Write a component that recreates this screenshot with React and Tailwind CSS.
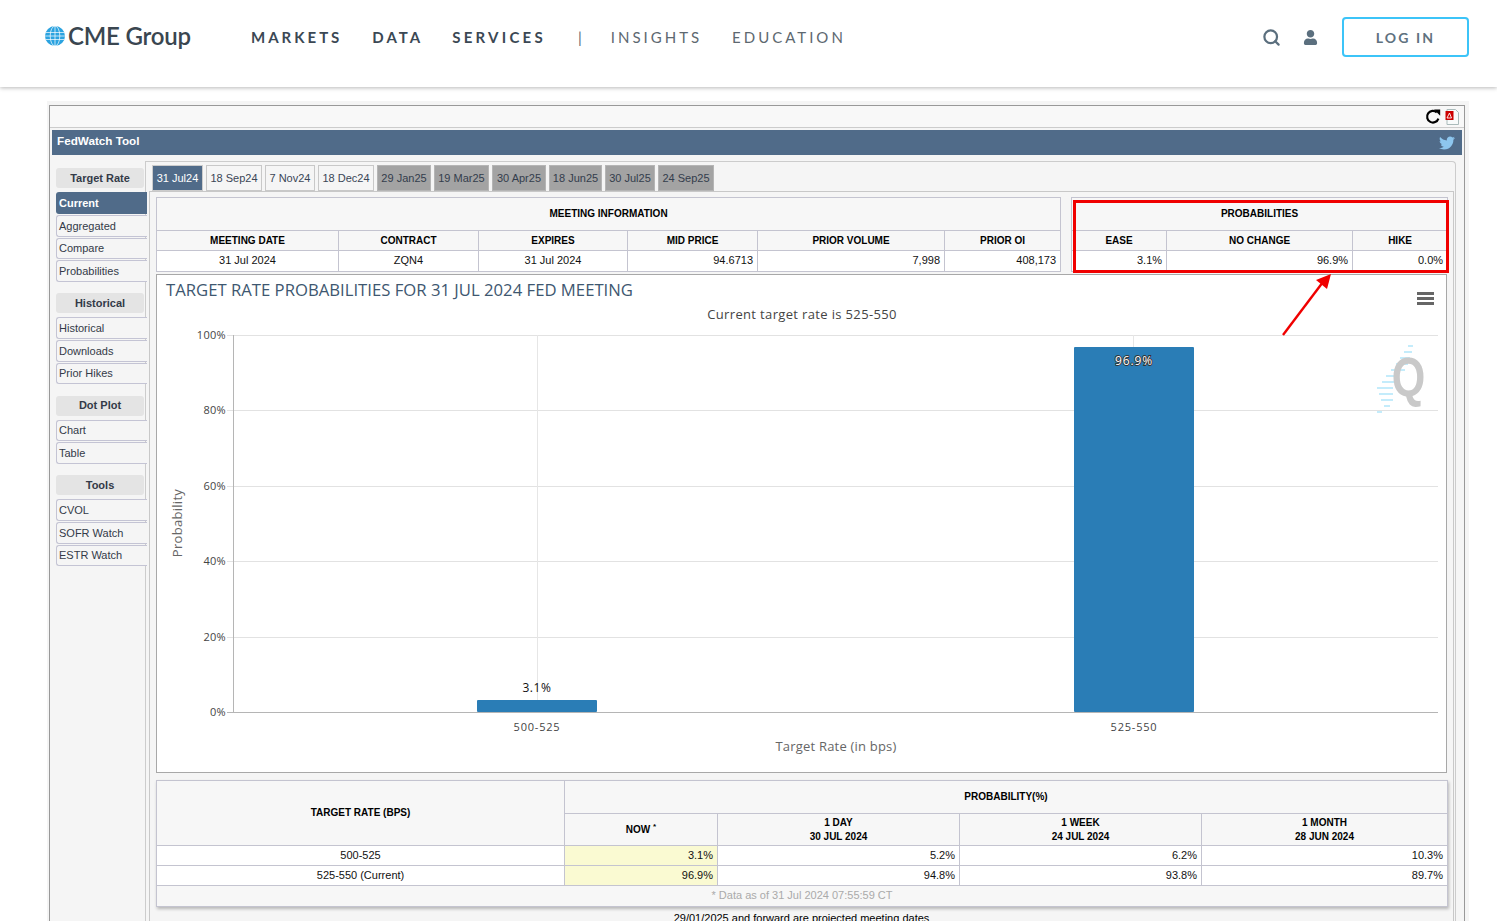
import { FaUser, FaTwitter } from "react-icons/fa";
import { Search } from "lucide-react";

const tabs = [
  { label: "31 Jul24", w: "w-[51px]", kind: "active" },
  { label: "18 Sep24", w: "w-[56px]", kind: "open" },
  { label: "7 Nov24", w: "w-[50px]", kind: "open" },
  { label: "18 Dec24", w: "w-[56px]", kind: "open" },
  { label: "29 Jan25", w: "w-[54px]", kind: "off" },
  { label: "19 Mar25", w: "w-[55px]", kind: "off" },
  { label: "30 Apr25", w: "w-[54px]", kind: "off" },
  { label: "18 Jun25", w: "w-[53px]", kind: "off" },
  { label: "30 Jul25", w: "w-[50px]", kind: "off" },
  { label: "24 Sep25", w: "w-[56px]", kind: "off" },
];

const menu = [
  { head: "Target Rate", items: ["Current", "Aggregated", "Compare", "Probabilities"] },
  { head: "Historical", items: ["Historical", "Downloads", "Prior Hikes"] },
  { head: "Dot Plot", items: ["Chart", "Table"] },
  { head: "Tools", items: ["CVOL", "SOFR Watch", "ESTR Watch"] },
];

const th = "border border-[#c4c4d0] bg-[#f7f7f7] text-[10px] leading-[14px] font-bold text-black text-center p-0 align-middle";
const td = "border border-[#c4c4d0] bg-white text-[11px] font-normal text-[#111] px-1 p-0 align-middle";

function CmeLogo() {
  return (
    <div className="flex items-center gap-[3px]">
      <svg width="20" height="20" viewBox="0 0 20 20">
        <circle cx="10" cy="10" r="10" fill="#2ba3e0" />
        <g stroke="#ffffff" strokeWidth="0.7" fill="none">
          <path d="M0.5 6.5h19M0 10h20M0.5 13.5h19" />
          <path d="M10 0v20" />
          <ellipse cx="10" cy="10" rx="4.8" ry="10" />
        </g>
      </svg>
      <span className="font-['Lato'] text-[24px] font-semibold tracking-[-0.2px] text-[#3a4650] leading-none">CME Group</span>
    </div>
  );
}

function Header() {
  return (
    <header className="h-[87px] bg-white shadow-[0_1px_4px_rgba(0,0,0,0.28)] flex items-center pl-[45px] pr-[28px] relative z-10">
      <div className="w-[206px] -mt-[15px]">
        <CmeLogo />
      </div>
      <nav className="flex items-center gap-[30px] font-['Lato'] text-[15px] tracking-[3px] -mt-[13px]">
        <a className="font-bold text-[#3b4854]">MARKETS</a>
        <a className="font-bold text-[#3b4854]">DATA</a>
        <a className="font-bold text-[#3b4854] tracking-[3.25px] -ml-[1px]">SERVICES</a>
        <span className="text-[#5d6870] ml-[2px]">|</span>
        <a className="text-[#5d6870] -ml-[4px]">INSIGHTS</a>
        <a className="text-[#5d6870]">EDUCATION</a>
      </nav>
      <div className="ml-auto flex items-center -mt-[13px]">
        <Search className="w-[19px] h-[19px] text-[#5b6f7e]" strokeWidth={2.8} />
        <FaUser className="w-[15px] h-[15px] text-[#5b6f7e] ml-[22px]" />
        <button className="ml-[24px] w-[127px] h-[40px] border-2 border-[#3cc4f8] rounded-[4px] font-['Lato'] font-bold text-[14px] tracking-[2.1px] text-[#5f7280]">
          LOG IN
        </button>
      </div>
    </header>
  );
}

function Sidebar() {
  return (
    <aside className="w-[91px] ml-[6px] mt-[13px] shrink-0 flex flex-col gap-[11.4px] font-['Liberation_Sans'] relative z-10">
      {menu.map((group) => (
        <div key={group.head}>
          <div className="w-[88px] h-[20px] flex items-center justify-center rounded-[3px] bg-[#e4e4e4] text-[11px] font-bold text-[#333a48] mb-[4px]">
            {group.head}
          </div>
          <div className="flex flex-col gap-px">
            {group.items.map((item) =>
              item === "Current" ? (
                <div key={item} className="h-[22px] pl-[3px] flex items-center rounded-l-[3px] bg-[#506b89] text-white text-[11px] font-bold">
                  {item}
                </div>
              ) : (
                <div key={item} className="h-[21.67px] pl-[2px] flex items-center rounded-l-[3px] border border-r-0 border-[#c4c4d4] bg-[#f5f5f5] text-[#333a48] text-[11px]">
                  {item}
                </div>
              )
            )}
          </div>
        </div>
      ))}
    </aside>
  );
}

function Tabs() {
  return (
    <div className="flex gap-[3px] pl-[6px] pt-[3px] h-[29px] font-['Liberation_Sans'] text-[11px]">
      {tabs.map((t) => (
        <div
          key={t.label}
          className={
            t.kind === "active"
              ? `${t.w} h-[26px] flex items-center justify-center bg-[#506b89] text-white border border-[#cccccc]`
              : t.kind === "open"
              ? `${t.w} h-[26px] flex items-center justify-center bg-[#f5f5f5] text-[#3a4656] border border-[#c8c8c8]`
              : `${t.w} h-[26px] flex items-center justify-center bg-[#a3a3a3] text-[#333d4c] border border-[#b5b5b5]`
          }
        >
          {t.label}
        </div>
      ))}
    </div>
  );
}

function MeetingTable() {
  return (
    <table className="w-[904px] table-fixed border-collapse font-['Liberation_Sans']">
      <colgroup>
        <col className="w-[182px]" />
        <col className="w-[140px]" />
        <col className="w-[149px]" />
        <col className="w-[130px]" />
        <col className="w-[187px]" />
        <col className="w-[116px]" />
      </colgroup>
      <tbody>
        <tr className="h-[33px]">
          <th colSpan={6} className={th}>MEETING INFORMATION</th>
        </tr>
        <tr className="h-[20px]">
          <th className={th}>MEETING DATE</th>
          <th className={th}>CONTRACT</th>
          <th className={th}>EXPIRES</th>
          <th className={th}>MID PRICE</th>
          <th className={th}>PRIOR VOLUME</th>
          <th className={th}>PRIOR OI</th>
        </tr>
        <tr className="h-[21px]">
          <td className={`${td} pb-[2px] text-center`}>31 Jul 2024</td>
          <td className={`${td} pb-[2px] text-center`}>ZQN4</td>
          <td className={`${td} pb-[2px] text-center`}>31 Jul 2024</td>
          <td className={`${td} pb-[2px] text-right`}>94.6713</td>
          <td className={`${td} pb-[2px] text-right`}>7,998</td>
          <td className={`${td} pb-[2px] text-right`}>408,173</td>
        </tr>
      </tbody>
    </table>
  );
}

function ProbTable() {
  return (
    <table className="w-[376px] table-fixed border-collapse font-['Liberation_Sans']">
      <colgroup>
        <col className="w-[95px]" />
        <col className="w-[186px]" />
        <col className="w-[95px]" />
      </colgroup>
      <tbody>
        <tr className="h-[33px]">
          <th colSpan={3} className={th}>PROBABILITIES</th>
        </tr>
        <tr className="h-[20px]">
          <th className={th}>EASE</th>
          <th className={th}>NO CHANGE</th>
          <th className={th}>HIKE</th>
        </tr>
        <tr className="h-[21px]">
          <td className={`${td} pb-[2px] text-right`}>3.1%</td>
          <td className={`${td} pb-[2px] text-right`}>96.9%</td>
          <td className={`${td} pb-[2px] text-right`}>0.0%</td>
        </tr>
      </tbody>
    </table>
  );
}

// chart uses page coordinates in its viewBox, easier to read off the picture
function Chart() {
  const grid = [
    { y: 335, label: "100%" },
    { y: 410, label: "80%" },
    { y: 486, label: "60%" },
    { y: 561, label: "40%" },
    { y: 637, label: "20%" },
    { y: 712, label: "0%" },
  ];
  return (
    <div className="w-[1291px] h-[499px] mt-[2px] border border-[#a8a8a8] bg-white">
      <svg width="1289" height="497" viewBox="157 275 1289 497" className="block font-['Open_Sans']">
        <text x="166" y="296" fontSize="16.7" fill="#3e5770">TARGET RATE PROBABILITIES FOR 31 JUL 2024 FED MEETING</text>
        <text x="802" y="319" fontSize="13" textAnchor="middle" fill="#444" letterSpacing="0.35">Current target rate is 525-550</text>
        <path d="M1417 293.5h17M1417 298.5h17M1417 303.5h17" stroke="#666" strokeWidth="2.8" />
        {grid.map((g) => (
          <g key={g.y}>
            <line x1="227" x2="1438" y1={g.y + 0.5} y2={g.y + 0.5} stroke={g.y === 712 ? "#b5b5b5" : "#e2e2e2"} />
            <text x="226" y={g.y + 4} fontSize="11" textAnchor="end" fill="#444" letterSpacing="0.3">{g.label}</text>
          </g>
        ))}
        <line x1="233.5" x2="233.5" y1="335" y2="712" stroke="#b5b5b5" />
        <line x1="537.5" x2="537.5" y1="335" y2="712" stroke="#e6e6e6" />
        <line x1="1133.5" x2="1133.5" y1="335" y2="712" stroke="#e6e6e6" />
        <rect x="477" y="700" width="120" height="12" rx="1" fill="#2a7db6" />
        <rect x="1074" y="347" width="120" height="365" rx="1" fill="#2a7db6" />
        <text x="537" y="692" fontSize="12" textAnchor="middle" fill="#111" letterSpacing="0.6">3.1%</text>
        <text x="1134" y="365" fontSize="12" textAnchor="middle" fill="#fff" stroke="#333" strokeWidth="1.8" paintOrder="stroke" letterSpacing="0.9">96.9%</text>
        <text x="537" y="731" fontSize="11" textAnchor="middle" fill="#444" letterSpacing="0.8">500-525</text>
        <text x="1134" y="731" fontSize="11" textAnchor="middle" fill="#444" letterSpacing="0.8">525-550</text>
        <text x="836" y="751" fontSize="13" textAnchor="middle" fill="#666" letterSpacing="0.2">Target Rate (in bps)</text>
        <text x="182" y="523" fontSize="13" textAnchor="middle" fill="#666" letterSpacing="0.3" transform="rotate(-90 182 523)">Probability</text>
        <g stroke="#c4ecfb" strokeWidth="2">
          <path d="M1408 346h5M1404 352h8M1400 358h10M1396 364h12M1391 370h14M1386 376h10M1382 382h12M1377 388h16M1379 394h14M1381 400h12M1384 406h6M1377 412h5" />
        </g>
        <text transform="translate(1408.5 396) scale(0.98 1.25)" fontSize="44" fontWeight="700" textAnchor="middle" fill="#c9c9c9" className="font-['Liberation_Sans']">Q</text>
      </svg>
    </div>
  );
}

function HistoryTable() {
  const rows = [
    ["500-525", "3.1%", "5.2%", "6.2%", "10.3%"],
    ["525-550 (Current)", "96.9%", "94.8%", "93.8%", "89.7%"],
  ];
  return (
    <table className="w-[1291px] mt-[7px] table-fixed border-collapse font-['Liberation_Sans'] shadow-[1px_2px_3px_rgba(0,0,0,0.25)]">
      <colgroup>
        <col className="w-[408px]" />
        <col className="w-[153px]" />
        <col className="w-[242px]" />
        <col className="w-[242px]" />
        <col className="w-[246px]" />
      </colgroup>
      <tbody>
        <tr className="h-[33px]">
          <th rowSpan={2} className={th}>TARGET RATE (BPS)</th>
          <th colSpan={4} className={th}>PROBABILITY(%)</th>
        </tr>
        <tr className="h-[32px]">
          <th className={th}>NOW <sup className="text-[8px]">*</sup></th>
          <th className={th}>1 DAY<br />30 JUL 2024</th>
          <th className={th}>1 WEEK<br />24 JUL 2024</th>
          <th className={th}>1 MONTH<br />28 JUN 2024</th>
        </tr>
        {rows.map((r) => (
          <tr key={r[0]} className="h-[20px]">
            <td className={`${td} text-center`}>{r[0]}</td>
            <td className={`${td} text-right !bg-[#fafad2]`}>{r[1]}</td>
            <td className={`${td} text-right`}>{r[2]}</td>
            <td className={`${td} text-right`}>{r[3]}</td>
            <td className={`${td} text-right`}>{r[4]}</td>
          </tr>
        ))}
        <tr className="h-[21px]">
          <td colSpan={5} className="border border-[#c4c4d0] bg-[#f7f7f7] text-[11px] text-[#aaaaaa] text-center p-0 pb-[2px]">
            * Data as of 31 Jul 2024 07:55:59 CT
          </td>
        </tr>
      </tbody>
    </table>
  );
}

function Annotation() {
  return (
    <>
      <div className="absolute left-[1073px] top-[200px] w-[376px] h-[73px] border-[3px] border-[#f00000] z-20" />
      <svg className="absolute left-[1275px] top-[270px] z-20" width="65" height="70" viewBox="1275 270 65 70">
        <line x1="1283" y1="335" x2="1323" y2="282" stroke="#f00000" strokeWidth="2.4" />
        <polygon points="1331,274 1327,289 1316,280" fill="#f00000" />
      </svg>
    </>
  );
}

export default function App() {
  return (
    <div className="relative h-screen overflow-hidden bg-white font-['Liberation_Sans']">
      <Header />
      <main className="ml-[47px] w-[1422px] mt-[14px] h-[900px] bg-[#f5f5f5] pt-[4px] pl-[2px] pr-[4px]">
        <div className="h-[896px] border border-[#999999] border-b-0">
          <div className="h-[22px] bg-[#f8f8f8] border-b border-[#cccccc] flex items-center justify-end gap-[4px] pr-[5px]">
            <svg width="16" height="16" viewBox="0 0 16 16" fill="none">
              <path d="M13.4 9.6A5.8 5.8 0 1 1 11.8 3.4" stroke="#000" strokeWidth="2.2" />
              <polygon points="9,0.6 15.2,0.6 15.2,6.8" fill="#000" />
            </svg>
            <svg width="14" height="16" viewBox="0 0 14 16">
              <path d="M2 0.5h8.5l3 3v12H2z" fill="#f8fbfb" stroke="#aabbbb" />
              <rect x="0.5" y="2" width="8" height="9" fill="#cc0000" />
              <path d="M2 9l2.5-5 2 5z" fill="none" stroke="#fff" strokeWidth="0.9" />
            </svg>
          </div>
          <div className="mx-[2px] mt-[2px] h-[25px] bg-[#506b89] flex items-center justify-between pl-[5px] pr-[7px] pb-[4px] text-white text-[11.7px] font-bold">
            <span>FedWatch Tool</span>
            <FaTwitter className="w-[16px] h-[16px] text-[#8dc6ee] mt-[4px]" />
          </div>
          <div className="flex">
            <Sidebar />
            <section className="ml-[-2px] mt-[6px] w-[1311px] border-t border-l border-r border-[#cccccc] rounded-tr-[4px] h-[760px]">
              <Tabs />
              <div className="ml-[3px] mr-px h-[740px] border-t border-l border-r border-[#c8c8c8] bg-[#f5f5f5] pl-[6px] pt-[5px]">
                <div className="flex gap-[10px]">
                  <MeetingTable />
                  <ProbTable />
                </div>
                <Chart />
                <HistoryTable />
                <p className="w-[1291px] mt-[4px] text-center text-[11px] leading-[14px] text-black">29/01/2025 and forward are projected meeting dates</p>
              </div>
            </section>
          </div>
        </div>
      </main>
      <Annotation />
    </div>
  );
}
